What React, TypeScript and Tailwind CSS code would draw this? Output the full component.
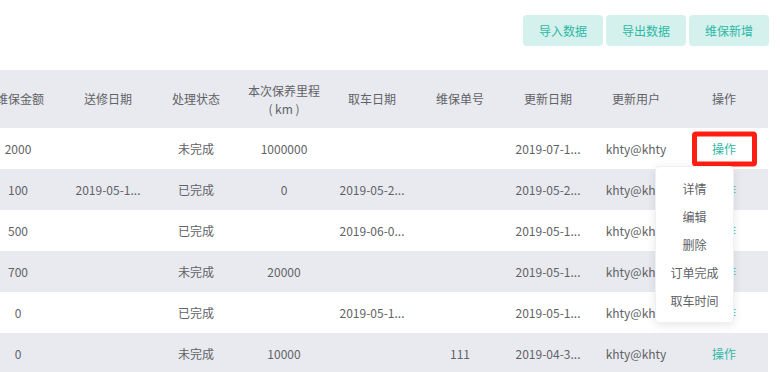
const headers = ["维保金额", "送修日期", "处理状态", "本次保养里程", "取车日期", "维保单号", "更新日期", "更新用户", "操作"];

const rows = [
  ["2000", "", "未完成", "1000000", "", "", "2019-07-1...", "khty@khty"],
  ["100", "2019-05-1...", "已完成", "0", "2019-05-2...", "", "2019-05-2...", "khty@khty"],
  ["500", "", "已完成", "", "2019-06-0...", "", "2019-05-1...", "khty@khty"],
  ["700", "", "未完成", "20000", "", "", "2019-05-1...", "khty@khty"],
  ["0", "", "已完成", "", "2019-05-1...", "", "2019-05-1...", "khty@khty"],
  ["0", "", "未完成", "10000", "", "111", "2019-04-3...", "khty@khty"],
];

const menu = ["详情", "编辑", "删除", "订单完成", "取车时间"];

export default function App() {
  return (
    <div
      className="relative w-[780px] h-[372px] overflow-hidden bg-white text-[12px] text-[#606266]"
      style={{ fontFamily: '"Noto Sans CJK SC", "Noto Sans", sans-serif' }}
    >
      <div className="flex justify-end gap-[3px] pt-[15px] pr-[11px]">
        {["导入数据", "导出数据", "维保新增"].map((b) => (
          <button
            key={b}
            className="w-[80px] h-[31px] rounded-[4px] bg-[#d4f1ed] text-[#2fb8a5] text-[12px]"
          >
            {b}
          </button>
        ))}
      </div>

      <div className="mt-[24px] w-[768px] overflow-hidden">
        <div className="-ml-[24px] w-[792px]">
          <div className="grid grid-cols-[repeat(9,88px)] h-[58px] bg-[#e9eaef] items-center text-center">
            {headers.map((h) =>
              h === "本次保养里程" ? (
                <div key={h} className="leading-[18px] pt-[2px]">
                  <div>本次保养里程</div>
                  <div>( km )</div>
                </div>
              ) : (
                <div key={h}>{h}</div>
              )
            )}
          </div>
          {rows.map((r, i) => (
            <div
              key={i}
              className={`grid grid-cols-[repeat(9,88px)] h-[41px] items-center text-center ${
                i % 2 === 1 ? "bg-[#e9eaef]" : "bg-white"
              }`}
            >
              {r.map((c, j) => (
                <div key={j} className={j === 0 ? "pr-[4px]" : ""}>
                  {c}
                </div>
              ))}
              <div className="relative text-[#2fb8a5]">
                操作
                {i === 0 && (
                  <div className="absolute left-[12px] top-1/2 -translate-y-1/2 w-[65px] h-[35px] border-[5px] border-[#ff1f12] rounded-[4px]" />
                )}
              </div>
            </div>
          ))}
        </div>
      </div>

      <div className="absolute left-[655px] top-[166px] w-[79px] bg-white rounded-[4px] shadow-[0_2px_10px_rgba(0,0,0,0.1)] border border-[#eef0f3] pt-[8px] pb-[7px] text-center">
        {menu.map((m) => (
          <div key={m} className="h-[28px] leading-[28px] text-[#606266]">
            {m}
          </div>
        ))}
      </div>
    </div>
  );
}
